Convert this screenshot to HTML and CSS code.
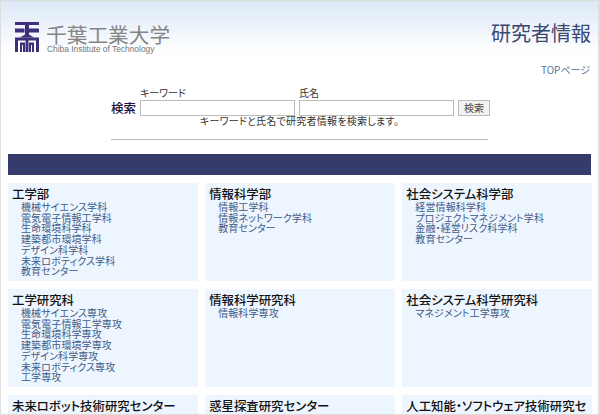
FILE: index.html
```html
<!DOCTYPE html>
<html lang="ja">
<head>
<meta charset="utf-8">
<title>研究者情報</title>
<link rel="stylesheet" href="styles.css">
</head>
<body>
<div class="page">
  <header class="header">
    <div class="brand">
      <svg class="mark" width="24" height="30" viewBox="0 0 24 30" aria-hidden="true">
        <g fill="#3d2f7a">
          <rect x="0" y="0" width="24" height="3"/>
          <rect x="0" y="6.5" width="9.5" height="4"/>
          <rect x="13.5" y="6.5" width="10.5" height="4"/>
          <path d="M10 3h4v9.5l5 3h-14l5-3z"/>
          <rect x="0" y="15.5" width="24" height="3"/>
          <path d="M0 30V18h3v12z"/>
          <path d="M5 30V20.5h5V30H8v-7H7v7z"/>
          <path d="M14 30V20.5h5V30h-2v-7h-1v7z"/>
          <path d="M21 30V18h3v12z"/>
          <path d="M10.5 30V18h3v12z"/>
        </g>
      </svg>
      <div class="brand-text">
        <div class="brand-ja">千葉工業大学</div>
        <div class="brand-en">Chiba Institute of Technology</div>
      </div>
    </div>
    <div class="page-title">研究者情報</div>
  </header>
  <div class="top-link-row"><a class="top-link" href="#">TOPページ</a></div>
  <form class="search">
    <div class="search-row">
      <span class="search-label">検索</span>
      <label class="field"><span class="field-label">キーワード</span><input class="input" type="text"></label>
      <label class="field"><span class="field-label">氏名</span><input class="input" type="text"></label>
      <button class="btn" type="button">検索</button>
    </div>
    <p class="hint">キーワードと氏名で研究者情報を検索します。</p>
  </form>
  <hr class="rule">
  <div class="navbar"></div>
  <main class="grid">
    <section class="card"><h2>工学部</h2><ul><li>機械サイエンス学科</li><li>電気電子情報工学科</li><li>生命環境科学科</li><li>建築都市環境学科</li><li>デザイン科学科</li><li>未来ロボティクス学科</li><li>教育センター</li></ul></section>
    <section class="card"><h2>情報科学部</h2><ul><li>情報工学科</li><li>情報ネットワーク学科</li><li>教育センター</li></ul></section>
    <section class="card"><h2>社会システム科学部</h2><ul><li>経営情報科学科</li><li>プロジェクトマネジメント学科</li><li>金融・経営リスク科学科</li><li>教育センター</li></ul></section>
    <section class="card"><h2>工学研究科</h2><ul><li>機械サイエンス専攻</li><li>電気電子情報工学専攻</li><li>生命環境科学専攻</li><li>建築都市環境学専攻</li><li>デザイン科学専攻</li><li>未来ロボティクス専攻</li><li>工学専攻</li></ul></section>
    <section class="card"><h2>情報科学研究科</h2><ul><li>情報科学専攻</li></ul></section>
    <section class="card"><h2>社会システム科学研究科</h2><ul><li>マネジメント工学専攻</li></ul></section>
    <section class="card"><h2>未来ロボット技術研究センター</h2></section>
    <section class="card"><h2>惑星探査研究センター</h2></section>
    <section class="card"><h2>人工知能・ソフトウェア技術研究センター</h2></section>
  </main>
</div>
</body>
</html>
```
FILE: styles.css
```css
* { box-sizing: border-box; }
html, body { margin: 0; padding: 0; height: 415px; overflow: hidden; background: #fff; }
body { font-family: "Noto Sans CJK JP", "Liberation Sans", sans-serif; font-size: 10px; color: #222; font-feature-settings: "palt"; }
.page {
  width: 600px; height: 415px; overflow: hidden;
  border: 1px solid #ddd; border-width: 1px 2px 1px 1px;
  background: linear-gradient(#dce8f7 0, #fff 52px) no-repeat;
}
.header { display: flex; justify-content: space-between; align-items: flex-start; height: 60px; padding: 21px 7px 0 14px; }
.brand { display: flex; gap: 8px; }
.mark { flex: none; }
.brand-text { margin-top: 2px; }
.brand-ja { font-size: 20.7px; line-height: 20px; margin-left: -1px; color: #858585; font-feature-settings: normal; }
.brand-en { font-family: "Liberation Sans", sans-serif; font-size: 8.4px; line-height: 10px; color: #777; }
.page-title { font-size: 20px; line-height: 22px; color: #3a4870; font-feature-settings: normal; }
.top-link-row { display: flex; justify-content: flex-end; padding-right: 8px; height: 24px; padding-top: 2px; }
.top-link { font-size: 10px; line-height: 14px; color: #5b73a0; text-decoration: none; }
.search { display: flex; flex-direction: column; align-items: center; }
.search-row { display: flex; align-items: flex-end; gap: 4px; height: 31px; padding-left: 2px; }
.search-label { font-size: 12.5px; font-weight: 500; line-height: 16px; color: #201040; }
.field { display: flex; flex-direction: column; }
.field-label { font-size: 10px; line-height: 15px; color: #333; }
.input { width: 155px; height: 16px; border: 1px solid #bbb; background: #fff; padding: 0; }
.btn { width: 32px; height: 16px; padding: 0; border: 1px solid #bbb; background: #f2f2f2; font: 10px/14px "Noto Sans CJK JP", sans-serif; color: #444; }
.hint { margin: -1px 0 0; font-size: 10px; line-height: 12px; letter-spacing: 0.25px; color: #333; }
.rule { margin: 12px 110px 0; height: 1px; border: 0; background: #bbb; }
.navbar { margin: 14px 7px 0; height: 21px; background: #353b6b; }
.grid { display: grid; grid-template-columns: repeat(3, 1fr); gap: 8px 7.5px; grid-auto-rows: 98px; margin: 8px 6px 0 7px; }
.card { background: #edf5fe; padding: 3px 4px 0; overflow: hidden; }
.card h2 { margin: 0; font-size: 12.4px; font-weight: 500; line-height: 16px; color: #111; }
.card ul { margin: 0; padding: 0 0 0 9px; list-style: none; }
.card li { font-size: 10px; line-height: 10.7px; letter-spacing: 0.1px; color: #3f5b88; }
```
